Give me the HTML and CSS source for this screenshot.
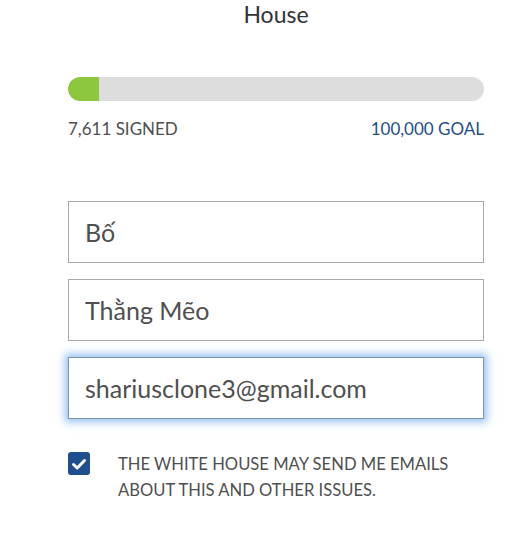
FILE: index.html
```html
<!DOCTYPE html>
<html lang="vi">
<head>
<meta charset="utf-8">
<link rel="stylesheet" href="styles.css">
</head>
<body>
<div class="panel">
  <div class="title">House</div>
  <div class="progress"><div class="fill" style="width:31px"></div></div>
  <div class="counts">
    <span class="signed">7,611 SIGNED</span>
    <span class="goal">100,000 GOAL</span>
  </div>
  <form class="form">
    <input class="field" type="text" value="Bố">
    <input class="field" type="text" value="Thằng Mẽo">
    <input class="field focused" type="text" value="shariusclone3@gmail.com">
    <label class="optin">
      <span class="check">
        <svg viewBox="0 0 22 22" width="22" height="22"><path d="M5.5 11.5 L9.2 15 L16.5 7.5" fill="none" stroke="#fff" stroke-width="3" stroke-linecap="round" stroke-linejoin="round"/></svg>
      </span>
      <span class="optin-text">THE WHITE HOUSE MAY SEND ME EMAILS ABOUT THIS AND OTHER ISSUES.</span>
    </label>
  </form>
</div>
</body>
</html>
```
FILE: styles.css
```css
html, body {
  margin: 0;
  padding: 0;
  background: #fff;
}
body {
  font-family: "Lato", "Open Sans", sans-serif;
  color: #4f4f4f;
}
.panel {
  width: 416px;
  margin-left: 68px;
  display: flex;
  flex-direction: column;
}
.title {
  text-align: center;
  font-size: 23px;
  line-height: 28px;
  color: #333;
}
.progress {
  margin-top: 49px;
  height: 24px;
  border-radius: 12px;
  background: #dddddd;
  overflow: hidden;
}
.fill {
  height: 100%;
  background: #8dc63f;
  border-radius: 12px 0 0 12px;
}
.counts {
  display: flex;
  justify-content: space-between;
  margin-top: 17px;
  font-size: 17px;
  line-height: 22px;
}
.signed { color: #4f4f4f; }
.goal { color: #1f4e89; }
.form {
  margin-top: 61px;
  display: flex;
  flex-direction: column;
  gap: 16px;
}
.field {
  box-sizing: border-box;
  width: 416px;
  height: 62px;
  margin: 0;
  padding: 0 16px;
  border: 1px solid #aaaaaa;
  border-radius: 0;
  font-family: inherit;
  font-size: 25px;
  color: #4f4f4f;
  background: #fff;
  outline: none;
}
.focused {
  border-color: #7a94b0;
  box-shadow: 0 0 8px 3px rgba(102, 165, 230, 0.7);
}
.optin {
  display: flex;
  align-items: flex-start;
  gap: 28px;
  margin-top: 17px;
}
.check {
  flex: none;
  width: 22px;
  height: 23px;
  border-radius: 3px;
  background: #1f4f8f;
  display: flex;
  align-items: center;
  justify-content: center;
}
.optin-text {
  font-size: 16.6px;
  line-height: 26px;
  color: #4f4f4f;
  margin-top: -1px;
}
```
